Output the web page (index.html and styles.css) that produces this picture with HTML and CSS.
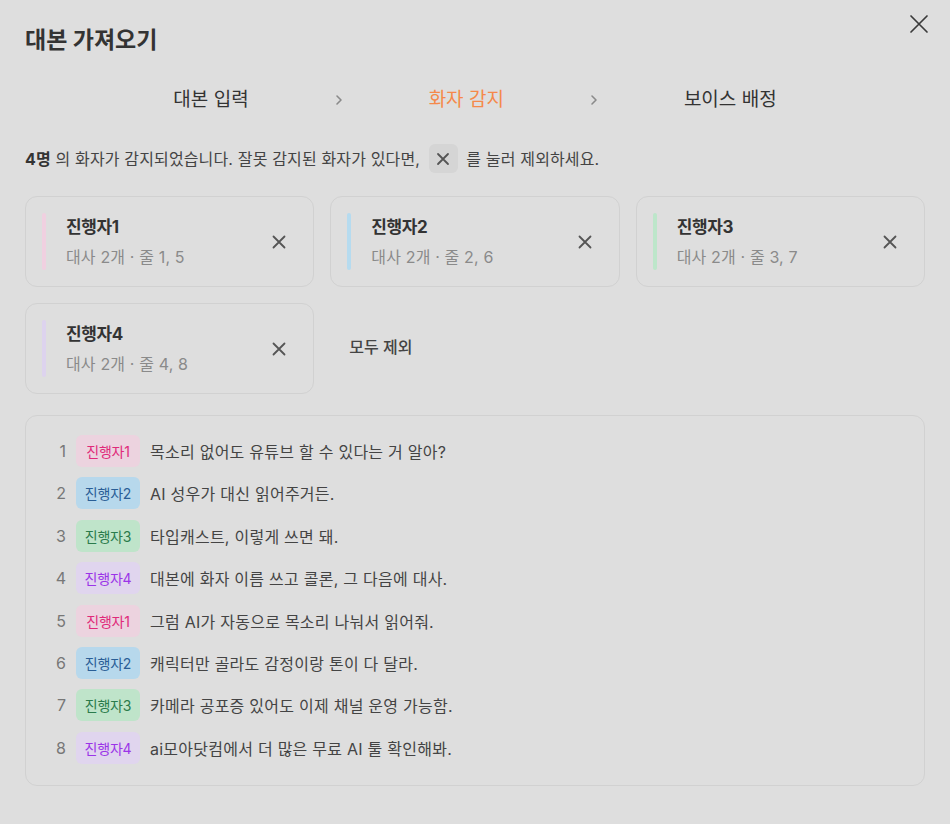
FILE: index.html
```html
<!DOCTYPE html>
<html lang="ko">
<head>
<meta charset="utf-8">
<title>대본 가져오기</title>
<link rel="stylesheet" href="styles.css">
</head>
<body>
<div class="modal">
  <header class="head">
    <h1 class="title">대본 가져오기</h1>
    <button class="close" aria-label="닫기">
      <svg width="20" height="20" viewBox="0 0 20 20"><path d="M2 2L18 18M18 2L2 18" stroke="#3a3a3a" stroke-width="1.7" stroke-linecap="round"/></svg>
    </button>
  </header>

  <nav class="steps">
    <span class="step">대본 입력</span>
    <svg class="chev" width="8" height="12" viewBox="0 0 8 12"><path d="M2 2L6 6L2 10" fill="none" stroke="#8a8a8a" stroke-width="1.6" stroke-linecap="round" stroke-linejoin="round"/></svg>
    <span class="step active">화자 감지</span>
    <svg class="chev" width="8" height="12" viewBox="0 0 8 12"><path d="M2 2L6 6L2 10" fill="none" stroke="#8a8a8a" stroke-width="1.6" stroke-linecap="round" stroke-linejoin="round"/></svg>
    <span class="step">보이스 배정</span>
  </nav>

  <p class="info"><b>4명</b> 의 화자가 감지되었습니다. 잘못 감지된 화자가 있다면, <span class="chip"><svg width="14" height="14" viewBox="0 0 14 14"><path d="M2 2L12 12M12 2L2 12" stroke="#555" stroke-width="1.8" stroke-linecap="round"/></svg></span> 를 눌러 제외하세요.</p>

  <div class="speakers">
    <div class="card">
      <span class="bar c1"></span>
      <div class="meta"><div class="name">진행자1</div><div class="sub">대사 2개 · 줄 1, 5</div></div>
      <button class="x" aria-label="제외"><svg width="14" height="14" viewBox="0 0 14 14"><path d="M1.5 1.5L12.5 12.5M12.5 1.5L1.5 12.5" stroke="#555" stroke-width="1.8" stroke-linecap="round"/></svg></button>
    </div>
    <div class="card">
      <span class="bar c2"></span>
      <div class="meta"><div class="name">진행자2</div><div class="sub">대사 2개 · 줄 2, 6</div></div>
      <button class="x" aria-label="제외"><svg width="14" height="14" viewBox="0 0 14 14"><path d="M1.5 1.5L12.5 12.5M12.5 1.5L1.5 12.5" stroke="#555" stroke-width="1.8" stroke-linecap="round"/></svg></button>
    </div>
    <div class="card">
      <span class="bar c3"></span>
      <div class="meta"><div class="name">진행자3</div><div class="sub">대사 2개 · 줄 3, 7</div></div>
      <button class="x" aria-label="제외"><svg width="14" height="14" viewBox="0 0 14 14"><path d="M1.5 1.5L12.5 12.5M12.5 1.5L1.5 12.5" stroke="#555" stroke-width="1.8" stroke-linecap="round"/></svg></button>
    </div>
    <div class="card">
      <span class="bar c4"></span>
      <div class="meta"><div class="name">진행자4</div><div class="sub">대사 2개 · 줄 4, 8</div></div>
      <button class="x" aria-label="제외"><svg width="14" height="14" viewBox="0 0 14 14"><path d="M1.5 1.5L12.5 12.5M12.5 1.5L1.5 12.5" stroke="#555" stroke-width="1.8" stroke-linecap="round"/></svg></button>
    </div>
    <button class="remove-all">모두 제외</button>
  </div>

  <ol class="script">
    <li class="row"><span class="num">1</span><span class="tag t1">진행자1</span><span class="text">목소리 없어도 유튜브 할 수 있다는 거 알아?</span></li>
    <li class="row"><span class="num">2</span><span class="tag t2">진행자2</span><span class="text">AI 성우가 대신 읽어주거든.</span></li>
    <li class="row"><span class="num">3</span><span class="tag t3">진행자3</span><span class="text">타입캐스트, 이렇게 쓰면 돼.</span></li>
    <li class="row"><span class="num">4</span><span class="tag t4">진행자4</span><span class="text">대본에 화자 이름 쓰고 콜론, 그 다음에 대사.</span></li>
    <li class="row"><span class="num">5</span><span class="tag t1">진행자1</span><span class="text">그럼 AI가 자동으로 목소리 나눠서 읽어줘.</span></li>
    <li class="row"><span class="num">6</span><span class="tag t2">진행자2</span><span class="text">캐릭터만 골라도 감정이랑 톤이 다 달라.</span></li>
    <li class="row"><span class="num">7</span><span class="tag t3">진행자3</span><span class="text">카메라 공포증 있어도 이제 채널 운영 가능함.</span></li>
    <li class="row"><span class="num">8</span><span class="tag t4">진행자4</span><span class="text">ai모아닷컴에서 더 많은 무료 AI 툴 확인해봐.</span></li>
  </ol>
</div>
</body>
</html>
```

FILE: styles.css
```css
* { box-sizing: border-box; }

body {
  margin: 0;
  background: #dedede;
  font-family: Inter, "Noto Sans CJK KR", sans-serif;
  color: #333;
}

.modal {
  padding: 0 25px;
}

.head {
  display: flex;
  justify-content: space-between;
  align-items: flex-start;
  padding-top: 26px;
}

.title {
  margin: 0;
  font-size: 23px;
  line-height: 28px;
  font-weight: 700;
  letter-spacing: 0;
  color: #333;
}

.close {
  width: 20px;
  height: 20px;
  margin-top: -12px;
  margin-right: -4px;
  padding: 0;
  border: none;
  background: none;
  display: grid;
  place-items: center;
}

.steps {
  margin-top: 33px;
  display: flex;
  justify-content: center;
  align-items: center;
  gap: 86px;
  font-size: 19px;
  line-height: 26px;
}

.step { color: #333; }
.step.active { color: #f5894a; }

.info {
  margin: 32px 0 0;
  font-size: 16px;
  line-height: 29px;
  color: #444;
  letter-spacing: 0.15px;
}

.info b {
  font-weight: 700;
  color: #333;
}

.chip {
  display: inline-flex;
  width: 29px;
  height: 29px;
  border-radius: 6px;
  background: #d5d5d5;
  align-items: center;
  justify-content: center;
  vertical-align: middle;
  margin: -4px 4px 0;
}

.speakers {
  margin-top: 22px;
  display: grid;
  grid-template-columns: repeat(3, 1fr);
  gap: 16px;
}

.card {
  height: 91px;
  border: 1px solid #d1d1d1;
  border-radius: 12px;
  padding: 16px;
  display: flex;
  align-items: stretch;
}

.bar {
  width: 4px;
  border-radius: 2px;
  margin-right: 20px;
  flex: none;
}

.c1 { background: #f0d0e0; }
.c2 { background: #b6dbef; }
.c3 { background: #bde6ca; }
.c4 { background: #ddd3ee; }

.meta {
  flex: 1;
  display: flex;
  flex-direction: column;
  justify-content: center;
  gap: 4px;
}

.name {
  font-size: 17px;
  line-height: 26px;
  font-weight: 700;
  color: #333;
  letter-spacing: -0.4px;
}

.sub {
  font-size: 16px;
  line-height: 26px;
  color: #8a8a8a;
  letter-spacing: 0.15px;
}

.x {
  width: 36px;
  height: 36px;
  align-self: center;
  padding: 0;
  border: none;
  background: none;
  display: grid;
  place-items: center;
}

.remove-all {
  justify-self: start;
  align-self: center;
  padding: 0 0 4px 19px;
  border: none;
  background: none;
  font-family: inherit;
  font-size: 16px;
  font-weight: 500;
  line-height: 26px;
  color: #444;
}

.script {
  list-style: none;
  margin: 21px 0 0;
  border: 1px solid #d1d1d1;
  border-radius: 12px;
  padding: 19px 20px 21px;
  display: flex;
  flex-direction: column;
  gap: 10.4px;
}

.row {
  display: flex;
  align-items: center;
  height: 32px;
}

.num {
  width: 20px;
  margin-right: 10px;
  text-align: right;
  font-size: 16px;
  color: #777;
}

.tag {
  width: 64px;
  height: 32px;
  border-radius: 6px;
  margin-right: 10px;
  display: flex;
  align-items: center;
  justify-content: center;
  font-size: 14px;
  letter-spacing: -0.2px;
  flex: none;
}

.t1 { background: #ecd3df; color: #e02a7a; }
.t2 { background: #b7d8ec; color: #2a5e96; }
.t3 { background: #bfe4ca; color: #2b7b4c; }
.t4 { background: #e0d5ee; color: #9b34e8; }

.text {
  font-size: 16px;
  color: #444;
  letter-spacing: 0.25px;
}
```
